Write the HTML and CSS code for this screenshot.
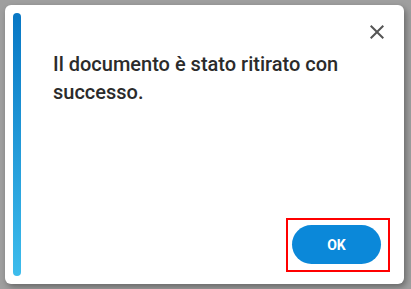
FILE: index.html
```html
<!DOCTYPE html>
<html lang="it">
<head>
<meta charset="utf-8">
<title>Dialog</title>
<link rel="stylesheet" href="styles.css">
</head>
<body>
<div class="dialog" role="dialog">
  <div class="accent"></div>
  <div class="content">
    <div class="top">
      <button class="close" aria-label="Chiudi">
        <svg width="24" height="24" viewBox="0 0 24 24"><path d="M19 6.41L17.59 5 12 10.59 6.41 5 5 6.41 10.59 12 5 17.59 6.41 19 12 13.41 17.59 19 19 17.59 13.41 12z" fill="#555"/></svg>
      </button>
    </div>
    <p class="message">Il documento è stato ritirato con successo.</p>
    <div class="actions">
      <div class="focus-ring"><button class="ok">OK</button></div>
    </div>
  </div>
</div>
</body>
</html>
```
FILE: styles.css
```css
html, body {
  margin: 0;
  padding: 0;
}
body {
  width: 411px;
  height: 289px;
  background: #9f9f9f;
  font-family: Roboto, "Liberation Sans", sans-serif;
  overflow: hidden;
}
.dialog {
  margin: 5px;
  width: 399px;
  height: 279px;
  box-sizing: border-box;
  background: #fff;
  border-radius: 6px;
  box-shadow: 2px 3px 6px rgba(0, 0, 0, 0.35);
  display: flex;
  padding: 8px 14px 12px 8px;
}
.accent {
  width: 8px;
  height: 263px;
  border-radius: 4px;
  background: linear-gradient(to bottom, #0877c4, #3dbcec);
  flex: none;
}
.content {
  flex: 1;
  display: flex;
  flex-direction: column;
  margin-left: 32px;
}
.top {
  display: flex;
  justify-content: flex-end;
  margin-top: 7px;
  margin-right: 1px;
}
.close {
  width: 24px;
  height: 24px;
  padding: 0;
  border: 0;
  background: none;
  display: block;
}
.close svg {
  display: block;
}
.message {
  margin: 6px 0 0 0;
  font-size: 20px;
  font-weight: 500;
  line-height: 28px;
  color: #2b2b2b;
  padding-right: 10px;
}
.actions {
  margin-top: auto;
  display: flex;
  justify-content: flex-end;
}
.focus-ring {
  width: 104px;
  height: 54px;
  box-sizing: border-box;
  border: 2px solid #ff0000;
  padding: 5px 7px 6px 4px;
}
.ok {
  display: block;
  width: 89px;
  height: 39px;
  border: 0;
  border-radius: 20px;
  background: #0b88d9;
  color: #fff;
  font-family: Roboto, "Liberation Sans", sans-serif;
  font-weight: 700;
  font-size: 14px;
  padding: 0;
}
```
